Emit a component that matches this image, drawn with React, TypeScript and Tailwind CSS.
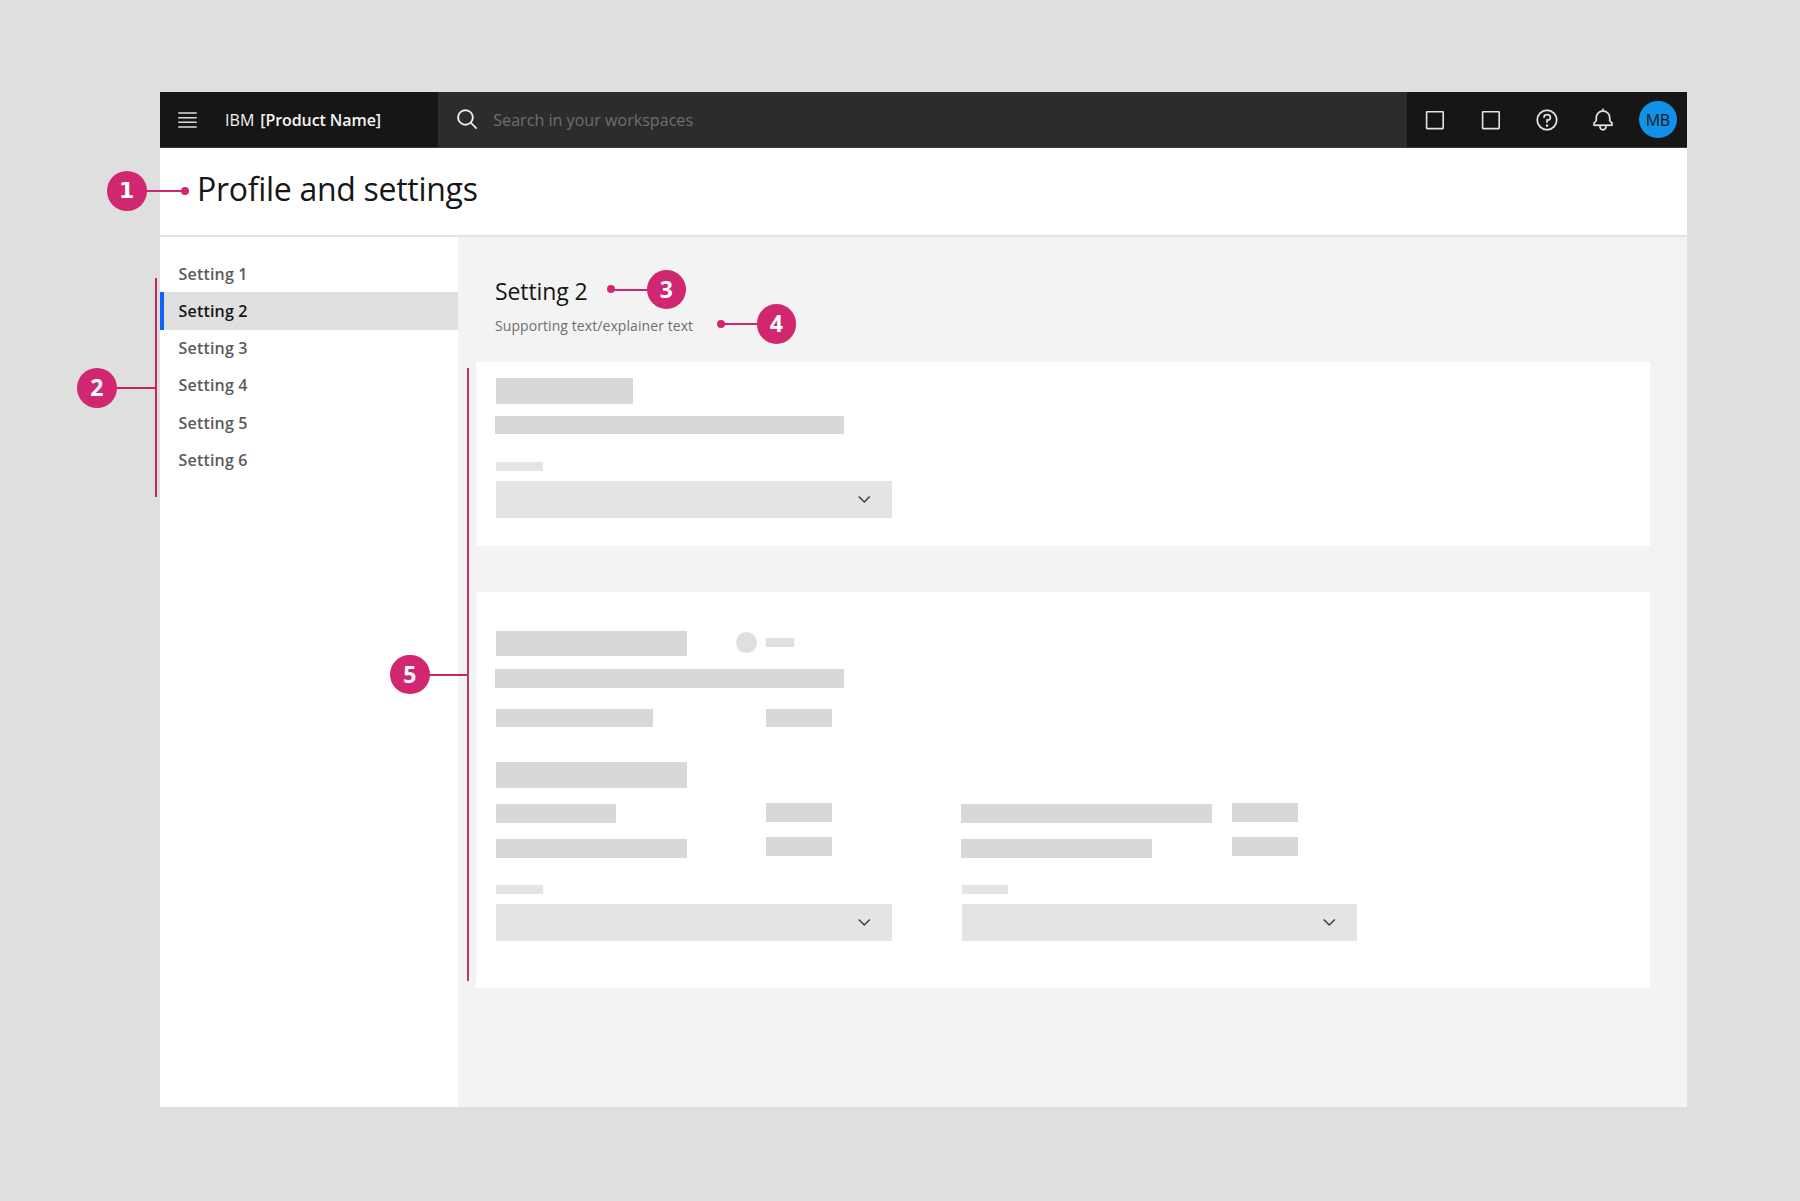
import React from "react";

function MenuIcon() {
  return (
    <svg width="20" height="18" viewBox="0 0 20 18" stroke="#dcdcdc" strokeWidth="1.6">
      <path d="M0.2 2H18.7M0.2 6.7H18.7M0.2 11.3H18.7M0.2 16H18.7" />
    </svg>
  );
}

function SearchIcon() {
  return (
    <svg width="23.3" height="23.3" viewBox="0 0 32 32" fill="#f4f4f4" stroke="#f4f4f4" strokeWidth="0.4">
      <path d="M29,27.5859l-7.5521-7.5521a11.0177,11.0177,0,1,0-1.4141,1.4141L27.5859,29ZM4,13a9,9,0,1,1,9,9A9.01,9.01,0,0,1,4,13Z" />
    </svg>
  );
}

function SquareIcon() {
  return (
    <svg width="24" height="24" viewBox="0 0 24 24" fill="none" stroke="#e4e4e4" strokeWidth="1.6">
      <rect x="3.6" y="3.8" width="16.6" height="16.8" rx="0.5" />
    </svg>
  );
}

function HelpIcon() {
  return (
    <svg width="24" height="24" viewBox="0 0 32 32" fill="#e8e8e8" stroke="#e8e8e8" strokeWidth="0.3">
      <path d="M16,2A14,14,0,1,0,30,16,14,14,0,0,0,16,2Zm0,26A12,12,0,1,1,28,16,12,12,0,0,1,16,28Z" />
      <circle cx="16" cy="23.5" r="1.5" />
      <path d="M17,8H15.5A4.49,4.49,0,0,0,11,12.5V13h2v-.5A2.5,2.5,0,0,1,15.5,10H17a2.5,2.5,0,0,1,0,5H15v4.5h2V17a4.5,4.5,0,0,0,0-9Z" />
    </svg>
  );
}

function BellIcon() {
  return (
    <svg width="24" height="24" viewBox="0 0 32 32" fill="#e8e8e8" stroke="#e8e8e8" strokeWidth="0.3">
      <path d="M28.7071,19.293,26,16.5859V13a10.0136,10.0136,0,0,0-9-9.9492V1H15V3.0508A10.0136,10.0136,0,0,0,6,13v3.5859L3.2929,19.293A1,1,0,0,0,3,20v3a1,1,0,0,0,1,1h7v.7768a5.152,5.152,0,0,0,4.5,5.1987A5.0057,5.0057,0,0,0,21,25V24h7a1,1,0,0,0,1-1V20A1,1,0,0,0,28.7071,19.293ZM19,25a3,3,0,0,1-6,0V24h6Zm8-3H5V20.4141L7.707,17.707A1,1,0,0,0,8,17V13a8,8,0,0,1,16,0v4a1,1,0,0,0,.293.707L27,20.4141Z" />
    </svg>
  );
}

function Select() {
  return (
    <div className="flex h-[37px] w-[395.6px] items-center justify-end bg-[#e4e4e4] pr-[18.5px]">
      <svg width="18.6" height="18.6" viewBox="0 0 16 16" fill="#393939">
        <path d="M8 11 3 6 3.7 5.3 8 9.6 12.3 5.3 13 6Z" stroke="#393939" strokeWidth="0.4" />
      </svg>
    </div>
  );
}

function Bar({ className }: { className: string }) {
  return <div className={`bg-[#d8d8d8] ${className}`} />;
}

function SelectField() {
  return (
    <div>
      <div className="mb-[9.5px] h-[9px] w-[46.5px] bg-[#e4e4e4]" />
      <Select />
    </div>
  );
}

function Header() {
  return (
    <header className="flex h-14 border-b border-[#393939] bg-[#161616]">
      <div className="flex w-[278px] items-center pl-[18px]">
        <MenuIcon />
        <div className="ml-[27px] text-[16px] leading-none tracking-[0.1px] whitespace-nowrap text-[#f4f4f4]">
          IBM <span className="ml-[1.5px] font-semibold tracking-[-0.08px]">[Product Name]</span>
        </div>
      </div>
      <div className="flex flex-1 items-center bg-[#2c2c2c] pl-[18px]">
        <SearchIcon />
        <span className="ml-[14px] text-[16px] leading-none tracking-[0.05px] text-[#6f6f6f]">Search in your workspaces</span>
      </div>
      <div className="flex w-[280px] items-center pl-4">
        <div className="flex gap-8">
          <SquareIcon />
          <SquareIcon />
          <HelpIcon />
          <BellIcon />
        </div>
        <div className="ml-[24.5px] flex size-[37.5px] items-center justify-center rounded-full bg-[#1192e8] text-[16px] leading-none tracking-[-0.3px] text-[#161616]">
          MB
        </div>
      </div>
    </header>
  );
}

const settings = ["Setting 1", "Setting 2", "Setting 3", "Setting 4", "Setting 5", "Setting 6"];

function Sidebar() {
  return (
    <nav className="w-[298px] bg-white pt-[18px]">
      {settings.map((name, i) => (
        <div
          key={name}
          className={
            "flex h-[37.25px] items-center pl-[14.5px] text-[16px] leading-none font-semibold tracking-[0.18px] " +
            (i === 1 ? "border-l-4 border-[#0f62fe] bg-[#e0e0e0] text-[#161616]" : "border-l-4 border-transparent text-[#5a5a5a]")
          }
        >
          {name}
        </div>
      ))}
    </nav>
  );
}

function Content() {
  return (
    <main className="flex-1 bg-[#f3f3f3] pt-[40px] pl-[18px]">
      <div className="h-[85px] pl-[19px]">
        <h2 className="text-[23px] leading-[28px] tracking-[-0.1px] text-[#161616]">Setting 2</h2>
        <p className="mt-[12px] text-[14px] leading-[18px] tracking-[0.08px] text-[#6f6f6f]">Supporting text/explainer text</p>
      </div>
      <section className="h-[184px] w-[1173.5px] bg-white pt-4 pl-5">
        <Bar className="h-[26px] w-[137px]" />
        <Bar className="mt-3 -ml-px h-[18px] w-[349px]" />
        <div className="mt-7">
          <SelectField />
        </div>
      </section>
      <section className="mt-[46px] h-[396px] w-[1173.5px] bg-white pt-[39px] pl-5">
        <div className="flex">
          <Bar className="h-[25px] w-[191px]" />
          <div className="mt-[1px] ml-[49px] size-[21px] rounded-full bg-[#dfdfdf]" />
          <div className="mt-[7px] ml-[9px] h-[9px] w-[28px] bg-[#dfdfdf]" />
        </div>
        <Bar className="mt-[13px] -ml-px h-[19px] w-[349px]" />
        <div className="mt-[21px] flex">
          <Bar className="h-[18px] w-[157px]" />
          <Bar className="ml-[113px] h-[18px] w-[66px]" />
        </div>
        <Bar className="mt-[35px] h-[26px] w-[191px]" />
        <div className="mt-[15px] flex">
          <div className="flex w-[465px]">
            <div className="w-[270px] pt-px">
              <Bar className="h-[19px] w-[120px]" />
              <Bar className="mt-4 h-[19px] w-[191px]" />
            </div>
            <div>
              <Bar className="h-[19px] w-[66px]" />
              <Bar className="mt-[15px] h-[19px] w-[66px]" />
            </div>
          </div>
          <div className="flex">
            <div className="w-[271px] pt-px">
              <Bar className="h-[19px] w-[251px]" />
              <Bar className="mt-4 h-[19px] w-[191px]" />
            </div>
            <div>
              <Bar className="h-[19px] w-[66px]" />
              <Bar className="mt-[15px] h-[19px] w-[66px]" />
            </div>
          </div>
        </div>
        <div className="mt-[27px] flex gap-[70px]">
          <SelectField />
          <SelectField />
        </div>
      </section>
    </main>
  );
}

function Badge({ n, className }: { n: number; className: string }) {
  return (
    <div
      className={`absolute flex size-[39.5px] items-center justify-center rounded-full bg-[#d12771] leading-none font-bold text-white ${className}`}
    >
      {n}
    </div>
  );
}

function Callouts() {
  return (
    <>
      <div className="absolute top-[190px] left-[140px] h-[2px] w-[45px] bg-[#d12771]" />
      <div className="absolute top-[187px] left-[181px] size-[8px] rounded-full bg-[#d12771]" />
      <Badge n={1} className="top-[171px] left-[107px] font-['DejaVu_Sans',sans-serif] text-[22px]" />

      <div className="absolute top-[278px] left-[155px] h-[219px] w-[2px] bg-[#c9245f]" />
      <div className="absolute top-[387px] left-[110px] h-[2px] w-[45px] bg-[#c9245f]" />
      <Badge n={2} className="top-[368px] left-[77px] text-[23px]" />

      <div className="absolute top-[289px] left-[611px] h-[2px] w-[45px] bg-[#d12771]" />
      <div className="absolute top-[285px] left-[607px] size-[8px] rounded-full bg-[#d12771]" />
      <Badge n={3} className="top-[269.6px] left-[646.6px] text-[23px]" />

      <div className="absolute top-[323px] left-[721px] h-[2px] w-[45px] bg-[#d12771]" />
      <div className="absolute top-[320px] left-[717px] size-[8px] rounded-full bg-[#d12771]" />
      <Badge n={4} className="top-[304px] left-[756.6px] text-[23px]" />

      <div className="absolute top-[368px] left-[467px] h-[613px] w-[2px] bg-[#c0356c]" />
      <div className="absolute top-[674px] left-[420px] h-[2px] w-[47px] bg-[#c9245f]" />
      <Badge n={5} className="top-[654.7px] left-[390px] text-[23px]" />
    </>
  );
}

export default function App() {
  return (
    <div className="relative h-[1201px] w-[1800px] overflow-hidden bg-[#dfdfdf] pt-[92px] pl-[160px] font-['Open_Sans','Noto_Sans',sans-serif]">
      <div className="flex h-[1015px] w-[1526.6px] flex-col">
        <Header />
        <div className="h-[89px] border-b-2 border-[#e4e4e4] bg-white pt-[19px] pl-[37px]">
          <h1 className="text-[32px] leading-[44px] tracking-[-0.29px] text-[#161616]">Profile and settings</h1>
        </div>
        <div className="flex flex-1">
          <Sidebar />
          <Content />
        </div>
      </div>
      <Callouts />
    </div>
  );
}
